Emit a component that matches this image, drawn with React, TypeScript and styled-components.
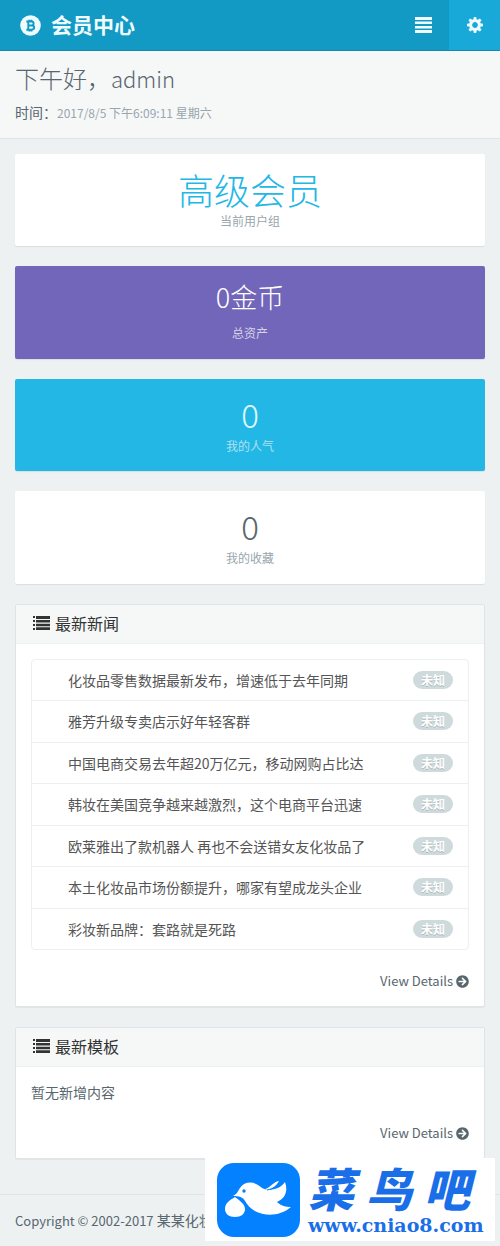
import React from "react";
import styled, { createGlobalStyle } from "styled-components";
import { FaArrowCircleRight } from "react-icons/fa";

const Global = createGlobalStyle`
  * { box-sizing: border-box; }
  body {
    margin: 0;
    background: #edf1f2;
    color: #58666e;
    font: 14px/20px "Noto Sans CJK SC", sans-serif;
  }
  a { color: inherit; text-decoration: none; }
  svg { display: block; flex: none; }
`;

const Page = styled.div`
  position: relative;
`;
const Header = styled.header`
  display: flex;
  align-items: stretch;
  height: 51px;
  background: #1299c4;
  border-bottom: 1px solid #1488ad;
  color: #effcff;
`;
const Brand = styled.a`
  display: flex;
  align-items: center;
  gap: 10px;
  margin-right: auto;
  padding-left: 20px;
  font-size: 21px;
  line-height: 30px;
  font-weight: 700;
`;
const BrandName = styled.span`
  padding-bottom: 3px;
`;
const HeaderButton = styled.button<{ $active?: boolean }>`
  display: flex;
  align-items: center;
  justify-content: center;
  width: 51px;
  padding: 0;
  border: 0;
  background: ${(p) => (p.$active ? "#19a9d9" : "transparent")};
  color: inherit;
`;
const Greeting = styled.section`
  height: 88px;
  padding: 11px 15px;
  background: #f6f8f8;
  border-bottom: 1px solid #dee5e7;
`;
const Hello = styled.h1`
  margin: 0;
  font-size: 24px;
  line-height: 32px;
  font-weight: 300;
`;
const UserName = styled.span`
  font-size: 22px;
`;
const Time = styled.p`
  margin: 8px 0 0;
  font-size: 14px;
`;
const TimeValue = styled.span`
  color: #98a6ad;
  font-size: 12px;
`;
const Main = styled.main`
  display: flex;
  flex-direction: column;
  gap: 20px;
  padding: 15px 15px 35px;
`;
const tones = {
  plain: { bg: "#ffffff", value: "#58666e", label: "#98a6ad" },
  info: { bg: "#ffffff", value: "#23b7e5", label: "#98a6ad" },
  purple: { bg: "#7266ba", value: "#ffffff", label: "#d6d3e6" },
  blue: { bg: "#23b7e5", value: "#dcf8ff", label: "#b0e1f1" },
};
type Tone = keyof typeof tones;
type Size = "large" | "medium" | "digit";
const valueSizes = { large: 36, medium: 27, digit: 33 };
const Stat = styled.section<{ $tone: Tone }>`
  display: flex;
  flex-direction: column;
  align-items: center;
  height: 92px;
  padding-top: 13px;
  border-radius: 2px;
  background: ${(p) => tones[p.$tone].bg};
  box-shadow: 0 1px 1px rgba(0, 0, 0, 0.08);
  &:nth-child(even) { height: 93px; }
`;
const StatValue = styled.div<{ $tone: Tone; $size: Size }>`
  color: ${(p) => tones[p.$tone].value};
  font-size: ${(p) => valueSizes[p.$size]}px;
  line-height: ${(p) => (p.$size === "medium" ? 36 : 44)}px;
  padding-bottom: ${(p) => (p.$size === "medium" ? 8 : 0)}px;
  font-weight: 300;
`;
const StatLabel = styled.div<{ $tone: Tone }>`
  color: ${(p) => tones[p.$tone].label};
  font-size: 12px;
`;
const Panel = styled.section`
  background: #fff;
  border: 1px solid #dee5e7;
  border-radius: 2px;
  box-shadow: 0 1px 1px rgba(0, 0, 0, 0.05);
`;
const PanelTitle = styled.h2`
  display: flex;
  align-items: center;
  gap: 5px;
  height: 39px;
  margin: 0;
  padding: 0 17px 3px;
  background: #f6f8f8;
  border-bottom: 1px solid #edf1f2;
  color: #333;
  font-size: 16px;
  font-weight: 400;
`;
const PanelBody = styled.div`
  padding: 15px;
`;
const News = styled.ul`
  margin: 0;
  padding: 0;
  list-style: none;
  border: 1px solid #edf0f1;
  border-radius: 4px;
`;
const NewsItem = styled.li`
  display: flex;
  align-items: center;
  justify-content: space-between;
  padding: 10px 15px 10px 36px;
  & + & { border-top: 1px solid #edf0f1; }
  &:nth-child(even) { padding-bottom: 11px; }
`;
const NewsLink = styled.a`
  color: #555;
`;
const Badge = styled.span`
  padding: 0 8px;
  border-radius: 10px;
  background: #cfdadd;
  color: #fff;
  font-size: 12px;
  line-height: 18px;
  font-weight: 700;
  text-shadow: 0 1px 0 rgba(0, 0, 0, 0.2);
`;
const Details = styled.a`
  display: flex;
  align-items: center;
  justify-content: flex-end;
  gap: 3px;
  margin-top: 21px;
  font-size: 13px;
`;
const Footer = styled.footer`
  height: 52px;
  padding: 15px;
  border-top: 1px solid #dee5e7;
  white-space: nowrap;
  overflow: hidden;
`;
const Years = styled.span`
  font-size: 13px;
`;
const Watermark = styled.a`
  position: absolute;
  right: 5px;
  bottom: 5px;
  display: flex;
  align-items: center;
  gap: 8px;
  width: 290px;
  height: 83px;
  padding-left: 12px;
  background: #fff;
  color: #1a6fe8;
`;
const MarkText = styled.span`
  display: flex;
  flex-direction: column;
`;
const MarkName = styled.span`
  display: flex;
  gap: 12px;
  font-size: 46px;
  line-height: 56px;
  font-weight: 900;
  font-style: italic;
`;
const MarkUrl = styled.span`
  padding-bottom: 6px;
  font: 700 19px/20px "DejaVu Serif", serif;
`;

const BitcoinIcon = () => (
  <svg width="21" height="21" viewBox="0 0 21 21" aria-hidden="true">
    <circle cx="10.500" cy="10.500" r="10.300" fill="currentColor" />
    <path
      fill="none"
      stroke="#1299c4"
      strokeWidth="1.900"
      d="M6.300 6.500h5q2.300 0 2.300 2t-2.300 2H8.500h3.200q2.500 0 2.500 2.100t-2.500 2.100H6.300M8.300 6.500v8M9.300 4.800v2M11.500 4.800v2M9.300 14.500v2M11.500 14.500v2"
    />
  </svg>
);
const MenuIcon = () => (
  <svg width="17" height="16" viewBox="0 0 17 16" aria-hidden="true">
    <path fill="currentColor" d="M0 0h17v3H0zM0 4.500h17v2.500H0zM0 9h17v2.500H0zM0 13h17v3H0z" />
  </svg>
);
const GearIcon = () => (
  <svg width="16" height="16" viewBox="-8 -8 16 16" aria-hidden="true">
    <circle r="4.400" fill="none" stroke="currentColor" strokeWidth="3" />
    {[0, 45, 90, 135, 180, 225, 270, 315].map((a) => (
      <path key={a} fill="currentColor" transform={`rotate(${a})`} d="M-1.700-5.200L-1.200-8h2.400l.5 2.800z" />
    ))}
  </svg>
);
const ListIcon = () => (
  <svg width="17" height="14" viewBox="0 0 17 14" aria-hidden="true">
    <path
      fill="currentColor"
      d="M0 0h2v2H0zM3 0h14v3H3zM0 4h2v2H0zM3 4h14v2.500H3zM0 8h2v2H0zM3 7.700h14v2.500H3zM0 12h2v2H0zM3 11.300h14V14H3z"
    />
  </svg>
);
const DoveLogo = () => (
  <svg width="83" height="74" viewBox="0 0 83 74" aria-hidden="true">
    <rect width="83" height="74" rx="17" fill="#0381fe" />
    <path
      fill="#fff"
      d="M16 33C20 31 21 28 23 25C27 19 35 18 41 22C44 24 46 26 50 27C57 27 64 25 68 19C71 27 69 35 60 39C64 43 69 44 74 44C66 51 55 53 46 51C36 49 31 43 28 38C26 34 22 33 16 33z"
    />
    <path fill="#fff" d="M48 26C53 25 56 19 62 18C60 22 56 26 50 27z" />
    <path fill="none" stroke="#0381fe" strokeWidth="1" d="M50 27C56 26 60 23 63 18" />
    <path fill="#fff" d="M18 34C13 37 8 40 8 46C8 51 12 54 18 54S28 51 28 46C28 41 23 38 18 34z" />
    <circle cx="27" cy="28" r="1.700" fill="#0381fe" />
  </svg>
);

const stats: { value: string; label: string; tone: Tone; size: Size }[] = [
  { value: "高级会员", label: "当前用户组", tone: "info", size: "large" },
  { value: "0金币", label: "总资产", tone: "purple", size: "medium" },
  { value: "0", label: "我的人气", tone: "blue", size: "digit" },
  { value: "0", label: "我的收藏", tone: "plain", size: "digit" },
];
const news = [
  "化妆品零售数据最新发布，增速低于去年同期",
  "雅芳升级专卖店示好年轻客群",
  "中国电商交易去年超20万亿元，移动网购占比达",
  "韩妆在美国竞争越来越激烈，这个电商平台迅速",
  "欧莱雅出了款机器人 再也不会送错女友化妆品了",
  "本土化妆品市场份额提升，哪家有望成龙头企业",
  "彩妆新品牌：套路就是死路",
];

export default function App() {
  return (
    <Page>
      <Global />
      <Header>
        <Brand href="#">
          <BitcoinIcon />
          <BrandName>会员中心</BrandName>
        </Brand>
        <HeaderButton aria-label="菜单"><MenuIcon /></HeaderButton>
        <HeaderButton $active aria-label="设置"><GearIcon /></HeaderButton>
      </Header>
      <Greeting>
        <Hello>下午好，<UserName>admin</UserName></Hello>
        <Time>时间：<TimeValue>2017/8/5 下午6:09:11 星期六</TimeValue></Time>
      </Greeting>
      <Main>
        {stats.map((s) => (
          <Stat key={s.label} $tone={s.tone}>
            <StatValue $tone={s.tone} $size={s.size}>{s.value}</StatValue>
            <StatLabel $tone={s.tone}>{s.label}</StatLabel>
          </Stat>
        ))}
        <Panel>
          <PanelTitle><ListIcon />最新新闻</PanelTitle>
          <PanelBody>
            <News>
              {news.map((n) => (
                <NewsItem key={n}>
                  <NewsLink href="#">{n}</NewsLink>
                  <Badge>未知</Badge>
                </NewsItem>
              ))}
            </News>
            <Details href="#">View Details <FaArrowCircleRight size={13} /></Details>
          </PanelBody>
        </Panel>
        <Panel>
          <PanelTitle><ListIcon />最新模板</PanelTitle>
          <PanelBody>
            <div>暂无新增内容</div>
            <Details href="#">View Details <FaArrowCircleRight size={13} /></Details>
          </PanelBody>
        </Panel>
      </Main>
      <Footer><Years>Copyright © 2002-2017</Years> 某某化妆品</Footer>
      <Watermark href="#">
        <DoveLogo />
        <MarkText>
          <MarkName><span>菜</span><span>鸟</span><span>吧</span></MarkName>
          <MarkUrl>www.cniao8.com</MarkUrl>
        </MarkText>
      </Watermark>
    </Page>
  );
}
